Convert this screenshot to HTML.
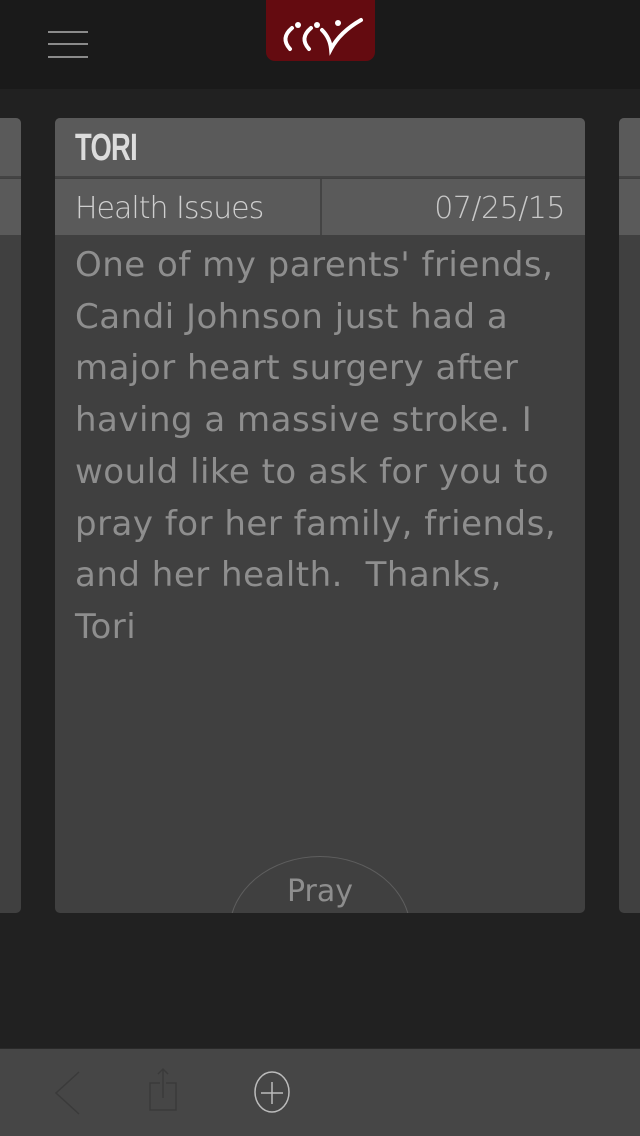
<!DOCTYPE html>
<html><head><meta charset="utf-8"><style>
*{margin:0;padding:0;box-sizing:border-box}
body{width:640px;height:1136px;background:#212121;position:relative;overflow:hidden;font-family:"Liberation Sans",sans-serif}
.top{position:absolute;left:0;top:0;width:640px;height:89px;background:#1a1a1a}
.ham{position:absolute;width:40px;height:2px;background:#8a8a8a}
.logo{position:absolute;top:0;height:61px;background:#640b10;border-radius:0 0 9px 9px}
.card{position:absolute;top:118px;height:795px;background:#404040;border-radius:5px;overflow:hidden}
.hdr{position:absolute;left:0;top:0;width:100%;height:60px;background:#5a5a5a;border-bottom:2px solid #444}
.cat{position:absolute;left:0;top:61px;width:100%;height:56px;background:#5a5a5a}
.bottom{position:absolute;left:0;top:1048px;width:640px;height:88px;background:#464646;border-top:1px solid #2a2a2a}
</style></head><body>
<div class="top">
 <div class="ham" style="left:48px;top:31px"></div>
 <div class="ham" style="left:48px;top:43px"></div>
 <div class="ham" style="left:48px;top:56px"></div>
 <div class="logo" style="left:266px;width:109px">
  <svg width="109" height="61" viewBox="0 0 109 61">
   <g fill="none" stroke="#fff" stroke-linecap="round">
    <path d="M26 28 Q14 38 24 49" stroke-width="4"/>
    <path d="M45 28 Q33 38 43 49" stroke-width="4"/>
    <path d="M56 30 Q64 38 65 49 Q74 32 95 20" stroke-width="4"/>
   </g>
   <g fill="#fff"><circle cx="32" cy="25" r="3"/><circle cx="51" cy="25" r="3"/><circle cx="72" cy="23" r="3"/></g>
  </svg>
 </div>
</div>

<div class="card" style="left:-20px;width:41px"><div class="hdr"></div><div class="cat"></div></div>
<div class="card" style="left:619px;width:60px"><div class="hdr"></div><div class="cat"></div></div>

<div class="card" style="left:55px;width:530px">
 <div class="hdr"><div style="position:absolute;left:20px;top:9px;font-size:38px;font-weight:bold;color:#dcdcdc;letter-spacing:-1px;transform:scaleX(0.72);transform-origin:left">TORI</div></div>
 <div class="cat">
  <div style="position:absolute;left:265px;top:0;width:2px;height:56px;background:#444"></div>
  <div style="position:absolute;left:20px;top:12px;font-size:30px;color:#cfcfcf;font-family:'DejaVu Sans',sans-serif;font-weight:200;letter-spacing:-1px">Health Issues</div>
  <div style="position:absolute;right:20px;top:12px;font-size:30px;color:#c8c8c8;font-family:'DejaVu Sans',sans-serif;font-weight:200;letter-spacing:-0.5px">07/25/15</div>
 </div>
 <div style="position:absolute;left:20px;top:122px;width:520px;font-size:34px;line-height:51.7px;color:#8e8e8e;font-family:'DejaVu Sans',sans-serif;letter-spacing:0.5px;white-space:pre">One of my parents' friends,
Candi Johnson just had a
major heart surgery after
having a massive stroke. I
would like to ask for you to
pray for her family, friends,
and her health.  Thanks,
Tori</div>
 <div style="position:absolute;left:174px;top:738px;width:182px;height:150px;border:1.5px solid #5e5e5e;border-radius:50%"></div>
 <div style="position:absolute;left:0;width:530px;top:756px;text-align:center;font-size:30px;color:#8e8e8e;font-family:'DejaVu Sans',sans-serif">Pray</div>
</div>

<div class="bottom">
 <svg width="640" height="88" style="position:absolute;left:0;top:-1px">
  <path d="M79 24 L56 45 L79 66" fill="none" stroke="#3a3a3a" stroke-width="1.5"/>
  <g fill="none" stroke="#3a3a3a" stroke-width="1.5">
   <path d="M160 35 H150 V62 H176 V35 H166"/>
   <path d="M163 50 V21 M158 26 L163 21 L168 26"/>
  </g>
  <g fill="none" stroke="#bbb" stroke-width="1.5">
   <ellipse cx="272" cy="44" rx="17" ry="20"/>
   <path d="M261 45 H283 M272 34 V56"/>
  </g>
 </svg>
</div>
</body></html>
